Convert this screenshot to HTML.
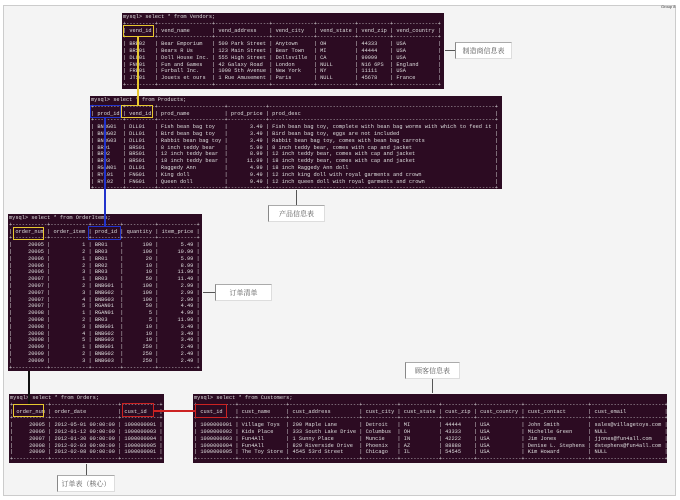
<!DOCTYPE html>
<html><head><meta charset="utf-8"><style>
*{margin:0;padding:0;box-sizing:border-box}
body{width:680px;height:500px;background:#fff;position:relative;overflow:hidden;font-family:"Liberation Sans","Noto Sans CJK SC",sans-serif}
#frame{position:absolute;left:3px;top:5px;width:673px;height:491px;background:#f4f4f4;border:1px solid #ccc}
.t{position:absolute;background:#2c0b22;color:#ddd;font-family:"Liberation Mono",monospace;font-size:5.3px;line-height:6.8px;white-space:pre;padding:1px 0 0 1px;overflow:hidden}
.lab{position:absolute;background:#fff;border:1px solid #ddd;border-left:1px solid #888;border-top:1px solid #aaa;font-family:"Liberation Serif","Noto Serif CJK SC",serif;font-size:7px;color:#555;display:flex;align-items:center;justify-content:center}
.ln{position:absolute}
.hl{position:absolute;border:1.5px solid}
</style></head><body>
<div id="frame"></div>
<div style="position:absolute;left:661px;top:4px;font-size:4px;color:#333">Group 8</div>

<div class="t" style="left:122px;top:13px;width:322px;height:76px">mysql&gt; select * from Vendors;
+---------+-----------------+-----------------+-------------+------------+----------+--------------+
| vend_id | vend_name       | vend_address    | vend_city   | vend_state | vend_zip | vend_country |
+---------+-----------------+-----------------+-------------+------------+----------+--------------+
| BRE02   | Bear Emporium   | 500 Park Street | Anytown     | OH         | 44333    | USA          |
| BRS01   | Bears R Us      | 123 Main Street | Bear Town   | MI         | 44444    | USA          |
| DLL01   | Doll House Inc. | 555 High Street | Dollsville  | CA         | 99999    | USA          |
| FNG01   | Fun and Games   | 42 Galaxy Road  | London      | NULL       | N16 6PS  | England      |
| FRB01   | Furball Inc.    | 1000 5th Avenue | New York    | NY         | 11111    | USA          |
| JTS01   | Jouets et ours  | 1 Rue Amusement | Paris       | NULL       | 45678    | France       |
+---------+-----------------+-----------------+-------------+------------+----------+--------------+</div>

<div class="t" style="left:90px;top:96px;width:412px;height:93px">mysql&gt; select * from Products;
+---------+---------+---------------------+------------+-----------------------------------------------------------------------+
| prod_id | vend_id | prod_name           | prod_price | prod_desc                                                             |
+---------+---------+---------------------+------------+-----------------------------------------------------------------------+
| BNBG01  | DLL01   | Fish bean bag toy   |       3.49 | Fish bean bag toy, complete with bean bag worms with which to feed it |
| BNBG02  | DLL01   | Bird bean bag toy   |       3.49 | Bird bean bag toy, eggs are not included                              |
| BNBG03  | DLL01   | Rabbit bean bag toy |       3.49 | Rabbit bean bag toy, comes with bean bag carrots                      |
| BR01    | BRS01   | 8 inch teddy bear   |       5.99 | 8 inch teddy bear, comes with cap and jacket                          |
| BR02    | BRS01   | 12 inch teddy bear  |       8.99 | 12 inch teddy bear, comes with cap and jacket                         |
| BR03    | BRS01   | 18 inch teddy bear  |      11.99 | 18 inch teddy bear, comes with cap and jacket                         |
| RGAN01  | DLL01   | Raggedy Ann         |       4.99 | 18 inch Raggedy Ann doll                                              |
| RYL01   | FNG01   | King doll           |       9.49 | 12 inch king doll with royal garments and crown                       |
| RYL02   | FNG01   | Queen doll          |       9.49 | 12 inch queen doll with royal garments and crown                      |
+---------+---------+---------------------+------------+-----------------------------------------------------------------------+</div>

<div class="t" style="left:8px;top:214px;width:194px;height:157px">mysql&gt; select * from OrderItems;
+-----------+------------+---------+----------+------------+
| order_num | order_item | prod_id | quantity | item_price |
+-----------+------------+---------+----------+------------+
|     20005 |          1 | BR01    |      100 |       5.49 |
|     20005 |          2 | BR03    |      100 |      10.99 |
|     20006 |          1 | BR01    |       20 |       5.99 |
|     20006 |          2 | BR02    |       10 |       8.99 |
|     20006 |          3 | BR03    |       10 |      11.99 |
|     20007 |          1 | BR03    |       50 |      11.49 |
|     20007 |          2 | BNBG01  |      100 |       2.99 |
|     20007 |          3 | BNBG02  |      100 |       2.99 |
|     20007 |          4 | BNBG03  |      100 |       2.99 |
|     20007 |          5 | RGAN01  |       50 |       4.49 |
|     20008 |          1 | RGAN01  |        5 |       4.99 |
|     20008 |          2 | BR03    |        5 |      11.99 |
|     20008 |          3 | BNBG01  |       10 |       3.49 |
|     20008 |          4 | BNBG02  |       10 |       3.49 |
|     20008 |          5 | BNBG03  |       10 |       3.49 |
|     20009 |          1 | BNBG01  |      250 |       2.49 |
|     20009 |          2 | BNBG02  |      250 |       2.49 |
|     20009 |          3 | BNBG03  |      250 |       2.49 |
+-----------+------------+---------+----------+------------+</div>

<div class="t" style="left:9px;top:394px;width:155px;height:69px">mysql&gt; select * from Orders;
+-----------+---------------------+------------+
| order_num | order_date          | cust_id    |
+-----------+---------------------+------------+
|     20005 | 2012-05-01 00:00:00 | 1000000001 |
|     20006 | 2012-01-12 00:00:00 | 1000000003 |
|     20007 | 2012-01-30 00:00:00 | 1000000004 |
|     20008 | 2012-02-03 00:00:00 | 1000000005 |
|     20009 | 2012-02-08 00:00:00 | 1000000001 |
+-----------+---------------------+------------+</div>

<div class="t" style="left:193px;top:394px;width:474px;height:69px">mysql&gt; select * from Customers;
+------------+---------------+----------------------+-----------+------------+----------+--------------+--------------------+-----------------------+
| cust_id    | cust_name     | cust_address         | cust_city | cust_state | cust_zip | cust_country | cust_contact       | cust_email            |
+------------+---------------+----------------------+-----------+------------+----------+--------------+--------------------+-----------------------+
| 1000000001 | Village Toys  | 200 Maple Lane       | Detroit   | MI         | 44444    | USA          | John Smith         | sales@villagetoys.com |
| 1000000002 | Kids Place    | 333 South Lake Drive | Columbus  | OH         | 43333    | USA          | Michelle Green     | NULL                  |
| 1000000003 | Fun4All       | 1 Sunny Place        | Muncie    | IN         | 42222    | USA          | Jim Jones          | jjones@fun4all.com    |
| 1000000004 | Fun4All       | 829 Riverside Drive  | Phoenix   | AZ         | 88888    | USA          | Denise L. Stephens | dstephens@fun4all.com |
| 1000000005 | The Toy Store | 4545 53rd Street     | Chicago   | IL         | 54545    | USA          | Kim Howard         | NULL                  |
+------------+---------------+----------------------+-----------+------------+----------+--------------+--------------------+-----------------------+</div>

<!-- highlight boxes -->
<div class="hl" style="left:123px;top:25px;width:31px;height:12px;border-color:#e8c830"></div>
<div class="hl" style="left:121px;top:105px;width:32px;height:13px;border-color:#e8c830"></div>
<div class="hl" style="left:90px;top:105px;width:31px;height:13px;border-color:#2233cc"></div>
<div class="hl" style="left:13px;top:227px;width:31px;height:13px;border-color:#e8c830"></div>
<div class="hl" style="left:88px;top:226px;width:33px;height:14px;border-color:#2233cc"></div>
<div class="hl" style="left:13px;top:404px;width:31px;height:13px;border-color:#e8c830"></div>
<div class="hl" style="left:122px;top:403px;width:32px;height:14px;border-color:#cc2222"></div>
<div class="hl" style="left:195px;top:404px;width:32px;height:14px;border-color:#cc2222"></div>

<!-- connector lines -->
<div class="ln" style="left:137px;top:37px;width:1.5px;height:68px;background:#e8c830"></div>
<div class="ln" style="left:104px;top:118px;width:2px;height:108px;background:#2233cc"></div>
<div class="ln" style="left:28px;top:371px;width:1.5px;height:33px;background:#111"></div>
<div class="ln" style="left:154px;top:410px;width:41px;height:2px;background:#cc2222"></div>

<!-- labels -->
<div class="lab" style="left:455px;top:42px;width:57px;height:17px">制造商信息表</div>
<div class="ln" style="left:445px;top:50px;width:10px;height:1px;background:#555"></div>
<div class="lab" style="left:268px;top:205px;width:57px;height:17px">产品信息表</div>
<div class="ln" style="left:296px;top:190px;width:1px;height:15px;background:#555"></div>
<div class="lab" style="left:215px;top:284px;width:57px;height:17px">订单清单</div>
<div class="ln" style="left:203px;top:292px;width:12px;height:1px;background:#555"></div>
<div class="lab" style="left:405px;top:362px;width:55px;height:17px">顾客信息表</div>
<div class="ln" style="left:432px;top:379px;width:1px;height:14px;background:#555"></div>
<div class="lab" style="left:57px;top:475px;width:58px;height:17px">订单表（核心）</div>
<div class="ln" style="left:86px;top:464px;width:1px;height:11px;background:#555"></div>
</body></html>
